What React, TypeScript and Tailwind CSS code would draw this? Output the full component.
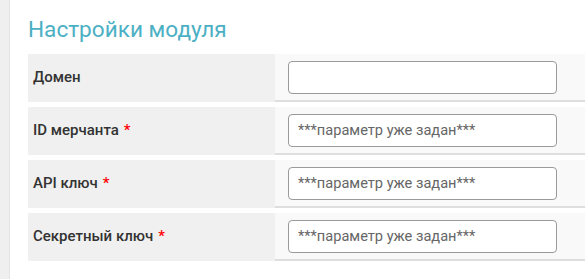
const fields = [
  { label: 'Домен', required: false, value: '' },
  { label: 'ID мерчанта', required: true, value: '***параметр уже задан***' },
  { label: 'API ключ', required: true, value: '***параметр уже задан***' },
  { label: 'Секретный ключ', required: true, value: '***параметр уже задан***' },
];

export default function App() {
  return (
    <div className="flex h-[279px] w-[585px] overflow-hidden bg-white font-['Roboto',sans-serif]">
      <div className="w-[10px] shrink-0 bg-[#efefef] border-r border-[#e4e4e4]" />
      <div className="flex-1 pl-[18px] pt-[14px]">
        <h2 className="text-[22.6px] font-normal leading-[32px] text-[#4cb0c4] mb-[8px]">Настройки модуля</h2>
        <div className="flex flex-col gap-[5px]">
          {fields.map((f) => (
            <div key={f.label} className="flex h-[48px]">
              <div className="flex w-[247px] items-center bg-[#f0f0f0] pl-[5px] pb-[2px] text-[15px] font-medium text-[#333]">
                {f.label}
                {f.required && <span className="ml-[5px] text-[#ff0000]">*</span>}
              </div>
              <div className="flex flex-1 items-center border-b-2 border-[#dedede] bg-[#f9f9f9] pl-[13px]">
                <input
                  type="text"
                  readOnly
                  placeholder={f.value}
                  className="h-[33px] w-[269px] rounded-[4px] border border-[#9a9a9a] bg-white px-[9px] text-[14.6px] text-[#555] placeholder:text-[#666] outline-none"
                />
              </div>
            </div>
          ))}
        </div>
      </div>
    </div>
  );
}
